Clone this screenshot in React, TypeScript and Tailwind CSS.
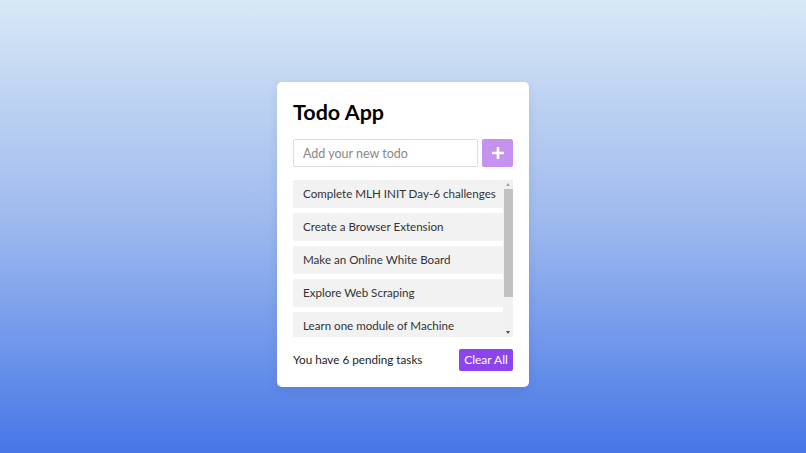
import { useState } from 'react'

const initialTodos = [
  'Complete MLH INIT Day-6 challenges',
  'Create a Browser Extension',
  'Make an Online White Board',
  'Explore Web Scraping',
  'Learn one module of Machine Learning',
  'Build a Portfolio Website',
]

export default function App() {
  const [todos, setTodos] = useState<string[]>(initialTodos)
  const [value, setValue] = useState('')

  const add = () => {
    if (!value.trim()) return
    setTodos([...todos, value.trim()])
    setValue('')
  }

  return (
    <div
      className="min-h-screen w-full flex items-start justify-center bg-gradient-to-b from-[#d8e8f6] via-[#9db8ee] to-[#4776e6] pt-[82px]"
      style={{ fontFamily: 'Lato, "Noto Sans", sans-serif' }}
    >
      <div className="w-[252px] bg-white rounded-[5px] shadow-[0_4px_12px_rgba(0,0,0,0.08)] px-4 pt-[16px] pb-[16px]">
        <h1 className="text-[21.5px] font-bold text-black leading-[28px]">Todo App</h1>
        <div className="flex gap-1 mt-[13px]">
          <input
            value={value}
            onChange={(e) => setValue(e.target.value)}
            placeholder="Add your new todo"
            className="w-[186px] h-[28px] border border-[#ddd] rounded-[2px] px-[9px] text-[12.5px] text-[#333] placeholder:text-[#888] outline-none"
          />
          <button
            onClick={add}
            className="w-[31px] h-[28px] rounded-[2px] bg-[#c592f0] text-white flex items-center justify-center"
          >
            <svg width="14" height="14" viewBox="0 0 14 14" fill="none" stroke="currentColor" strokeWidth="2.6">
              <path d="M7 1v12M1 7h12" />
            </svg>
          </button>
        </div>
        <div className="mt-[13px] h-[157px] flex">
          <ul className="flex-1 overflow-hidden flex flex-col">
            {todos.map((t) => (
              <li
                key={t}
                className="shrink-0 bg-[#f2f2f2] pl-[10px] pr-[4px] py-[6px] text-[11.6px] leading-[16px] text-[#333] mb-[5px] last:mb-0"
              >
                {t}
              </li>
            ))}
          </ul>
          <div className="w-[10px] bg-[#f1f1f1] flex flex-col items-center">
            <div className="h-[9px] flex items-center justify-center">
              <div className="w-0 h-0 border-x-[2.5px] border-x-transparent border-b-[3px] border-b-[#a3a3a3]" />
            </div>
            <div className="w-[9px] h-[108px] bg-[#c1c1c1]" />
            <div className="flex-1" />
            <div className="h-[10px] flex items-center justify-center">
              <div className="w-0 h-0 border-x-[2.5px] border-x-transparent border-t-[3px] border-t-[#505050]" />
            </div>
          </div>
        </div>
        <div className="flex items-center justify-between mt-[12px]">
          <span className="text-[11.7px] text-[#222]">You have {todos.length} pending tasks</span>
          <button
            onClick={() => setTodos([])}
            className="h-[22px] w-[54px] rounded-[2px] bg-[#8e44ec] text-white text-[12px]"
          >
            Clear All
          </button>
        </div>
      </div>
    </div>
  )
}
